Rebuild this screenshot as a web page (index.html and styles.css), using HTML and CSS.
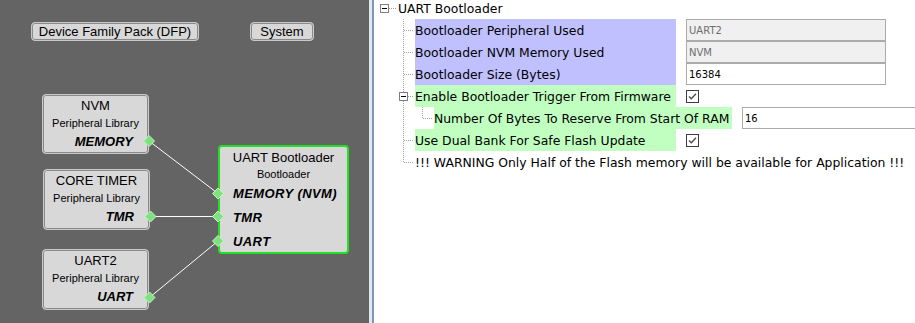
FILE: index.html
```html
<!DOCTYPE html>
<html lang="en">

<head>
    <meta charset="UTF-8" />
    <title>UART Bootloader</title>
    <link rel="stylesheet" href="styles.css">
</head>

<body>
    <div class="canvas">
        <div class="group-btn btn-dfp">Device Family Pack (DFP)</div>
        <div class="group-btn btn-system">System</div>

        <div class="comp comp-nvm">
            <div class="comp-title">NVM</div>
            <div class="comp-sub">Peripheral Library</div>
            <div class="port port-out">MEMORY</div>
        </div>

        <div class="comp comp-tmr">
            <div class="comp-title">CORE TIMER</div>
            <div class="comp-sub">Peripheral Library</div>
            <div class="port port-out">TMR</div>
        </div>

        <div class="comp comp-uart">
            <div class="comp-title">UART2</div>
            <div class="comp-sub">Peripheral Library</div>
            <div class="port port-out">UART</div>
        </div>

        <div class="comp comp-boot">
            <div class="comp-title">UART Bootloader</div>
            <div class="comp-sub">Bootloader</div>
            <div class="port port-in">MEMORY (NVM)</div>
            <div class="port port-in">TMR</div>
            <div class="port port-in">UART</div>
        </div>

        <svg class="wires" width="369" height="323" viewBox="0 0 369 323">
            <g stroke="#ffffff" stroke-width="1">
                <line x1="149" y1="141" x2="218" y2="193.5" />
                <line x1="150" y1="216.5" x2="218" y2="216.5" />
                <line x1="149.5" y1="297.5" x2="218" y2="241" />
            </g>
            <g fill="#7ee37e" stroke="#c8f5c8" stroke-width="1">
                <polygon points="149,135.5 154.5,141 149,146.5 143.5,141" />
                <polygon points="150.5,211 156,216.5 150.5,222 145,216.5" />
                <polygon points="149.5,292 155,297.5 149.5,303 144,297.5" />
                <polygon points="218,188 223.5,193.5 218,199 212.5,193.5" />
                <polygon points="218,211 223.5,216.5 218,222 212.5,216.5" />
                <polygon points="218,235.5 223.5,241 218,246.5 212.5,241" />
            </g>
        </svg>
    </div>

    <div class="divider"></div>

    <div class="props">
        <div class="tree">
            <div class="root-row">
                <svg class="toggle" width="9" height="9" viewBox="0 0 9 9">
                    <rect x="0.5" y="0.5" width="8" height="8" fill="#fff" stroke="#7f7f7f" />
                    <line x1="2" y1="4.5" x2="7" y2="4.5" stroke="#000" />
                </svg>
                <span class="root-line"></span>
                <span class="root-text">UART Bootloader</span>
            </div>

            <div class="row">
                <span class="branch"></span>
                <span class="label label-ro">Bootloader Peripheral Used</span>
                <span class="field field-ro">UART2</span>
            </div>
            <div class="row">
                <span class="branch"></span>
                <span class="label label-ro">Bootloader NVM Memory Used</span>
                <span class="field field-ro">NVM</span>
            </div>
            <div class="row">
                <span class="branch"></span>
                <span class="label label-ro">Bootloader Size (Bytes)</span>
                <span class="field">16384</span>
            </div>
            <div class="row">
                <span class="branch branch-open">
                    <svg class="toggle" width="9" height="9" viewBox="0 0 9 9">
                        <rect x="0.5" y="0.5" width="8" height="8" fill="#fff" stroke="#7f7f7f" />
                        <line x1="2" y1="4.5" x2="7" y2="4.5" stroke="#000" />
                    </svg>
                </span>
                <span class="label label-set">Enable Bootloader Trigger From Firmware</span>
                <svg class="check" width="13" height="13" viewBox="0 0 13 13">
                    <rect x="0.5" y="0.5" width="12" height="12" fill="#fff" stroke="#3c3c3c" />
                    <path d="M3 6.5 L5.3 8.8 L10 3.8" fill="none" stroke="#4a4a4a" stroke-width="1.3" />
                </svg>
            </div>
            <div class="row">
                <span class="branch branch-pass"></span>
                <span class="sub-branch"></span>
                <span class="label label-set label-wide">Number Of Bytes To Reserve From Start Of RAM</span>
                <span class="field field-wide">16</span>
            </div>
            <div class="row">
                <span class="branch"></span>
                <span class="label label-set">Use Dual Bank For Safe Flash Update</span>
                <svg class="check" width="13" height="13" viewBox="0 0 13 13">
                    <rect x="0.5" y="0.5" width="12" height="12" fill="#fff" stroke="#3c3c3c" />
                    <path d="M3 6.5 L5.3 8.8 L10 3.8" fill="none" stroke="#4a4a4a" stroke-width="1.3" />
                </svg>
            </div>
            <div class="row">
                <span class="branch branch-last"></span>
                <span class="label">!!! WARNING Only Half of the Flash memory will be available for Application !!!</span>
            </div>
        </div>
    </div>
</body>

</html>
```

FILE: styles.css
```css
body {
    margin: 0;
    display: flex;
    height: 323px;
    overflow: hidden;
    font-family: "Liberation Sans", Arial, sans-serif;
    font-size: 13px;
    color: #000;
    background-color: #fff;
}

/* diagram */
.canvas {
    position: relative;
    flex: none;
    width: 369px;
    height: 323px;
    background-color: #646464;
}

.wires {
    position: absolute;
    left: 0;
    top: 0;
}

.group-btn {
    position: absolute;
    top: 22px;
    height: 19px;
    box-sizing: border-box;
    display: flex;
    align-items: center;
    justify-content: center;
    background-color: #d8d8d8;
    border: 1px solid #c9c9c9;
    border-radius: 4px;
    box-shadow: inset 0 0 0 1px #8a8a8a;
}

.btn-dfp {
    left: 31px;
    width: 168px;
}

.btn-system {
    left: 250px;
    width: 64px;
}

.comp {
    position: absolute;
    box-sizing: border-box;
    width: 107px;
    height: 61px;
    padding: 2px 4px 0;
    background-color: #d8d8d8;
    border: 1px solid #c9c9c9;
    border-radius: 4px;
    box-shadow: inset 0 0 0 1px #8a8a8a;
    white-space: nowrap;
}

.comp-nvm {
    left: 42px;
    top: 94px;
    height: 60px;
}

.comp-tmr {
    left: 43px;
    top: 169px;
}

.comp-uart {
    left: 42px;
    top: 249px;
}

.comp-boot {
    left: 218px;
    top: 145px;
    width: 131px;
    height: 109px;
    padding: 2px 4px 0 13px;
    border: 2px solid #22e022;
    box-shadow: none;
}

.comp-title {
    text-align: center;
    line-height: 17px;
}

.comp-sub {
    text-align: center;
    font-size: 11px;
    line-height: 19px;
}

.comp-boot .comp-sub {
    line-height: 16px;
}

.comp-boot .comp-title,
.comp-boot .comp-sub {
    margin-left: -9px;
}

.port {
    font-weight: bold;
    font-style: italic;
    line-height: 18px;
}

.port-out {
    text-align: right;
    padding-right: 11px;
}

.port-in {
    line-height: 24px;
    letter-spacing: 0.4px;
}

/* splitter */
.divider {
    flex: none;
    width: 6px;
    background: linear-gradient(to right, #dfe6ee 0 3px, #7b97b6 3px 5px, #fff 5px);
}

/* property tree */
.props {
    flex: 1;
    overflow: hidden;
    font-family: "DejaVu Sans", Verdana, sans-serif;
    font-size: 12.4px;
}

.tree {
    margin-top: -3px;
}

.root-row {
    display: flex;
    align-items: center;
    height: 22px;
    padding-left: 5px;
}

.toggle {
    flex: none;
    display: block;
}

.root-line {
    width: 8px;
    height: 1px;
    background: repeating-linear-gradient(to right, #a0a0a0 0 1px, transparent 1px 2px);
}

.root-text {
    margin-left: 1px;
    white-space: nowrap;
}

.row {
    display: flex;
    align-items: center;
    height: 22px;
    white-space: nowrap;
}

.branch {
    flex: none;
    align-self: stretch;
    display: flex;
    align-items: center;
    width: 12px;
    margin-left: 28px;
    background:
        repeating-linear-gradient(to bottom, #a0a0a0 0 1px, transparent 1px 2px) 0 0 / 1px 100% no-repeat,
        repeating-linear-gradient(to right, #a0a0a0 0 1px, transparent 1px 2px) 1px 11px / 10px 1px no-repeat;
}

.branch-open .toggle {
    margin-left: -4px;
}

.branch-pass {
    background:
        repeating-linear-gradient(to bottom, #a0a0a0 0 1px, transparent 1px 2px) 0 0 / 1px 100% no-repeat;
}

.branch-last {
    background:
        repeating-linear-gradient(to bottom, #a0a0a0 0 1px, transparent 1px 2px) 0 0 / 1px 12px no-repeat,
        repeating-linear-gradient(to right, #a0a0a0 0 1px, transparent 1px 2px) 1px 11px / 10px 1px no-repeat;
}

.sub-branch {
    flex: none;
    align-self: stretch;
    width: 19px;
    background:
        repeating-linear-gradient(to bottom, #a0a0a0 0 1px, transparent 1px 2px) 7px 0 / 1px 12px no-repeat,
        repeating-linear-gradient(to right, #a0a0a0 0 1px, transparent 1px 2px) 8px 11px / 10px 1px no-repeat;
}

.label {
    flex: none;
    align-self: stretch;
    display: flex;
    align-items: center;
}

.label-ro,
.label-set {
    width: 261px;
    overflow: hidden;
}

.label-ro {
    background-color: #c0c0ff;
}

.label-set {
    background-color: #c0ffc0;
}

.label-wide {
    width: 298px;
}

.field {
    flex: none;
    align-self: stretch;
    display: flex;
    align-items: center;
    box-sizing: border-box;
    width: 200px;
    margin-left: 10px;
    padding-left: 2px;
    border: 1px solid #ababab;
    background-color: #fff;
    font-size: 10px;
}

.field-ro {
    background-color: #f0f0f0;
    color: #6d6d6d;
}

.field-wide {
    width: 240px;
}

.check {
    flex: none;
    display: block;
    margin-left: 10px;
}
```
